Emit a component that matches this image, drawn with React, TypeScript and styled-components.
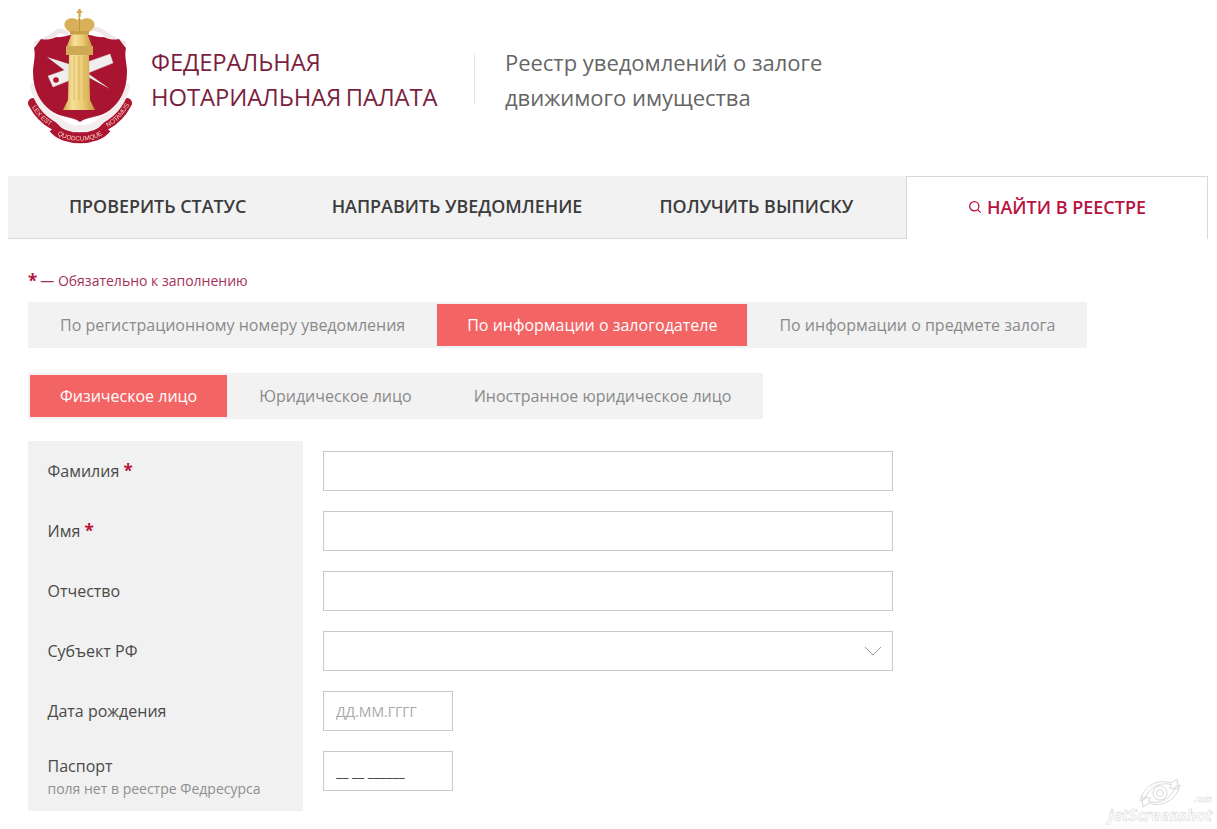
import styled, { createGlobalStyle } from 'styled-components'

const GlobalStyle = createGlobalStyle`
  html, body {
    margin: 0;
    padding: 0;
    background: #fff;
  }
  body {
    font-family: "Open Sans", "Noto Sans", "DejaVu Sans", sans-serif;
    color: #4a4a4a;
  }
  * {
    box-sizing: border-box;
  }
`

const Logo = () => (
  <LogoSvg viewBox="28 8 104 140" aria-hidden="true">
    <defs>
      <linearGradient id="gold" x1="0" x2="1" y1="0" y2="0">
        <stop offset="0" stopColor="#d2a648" />
        <stop offset="0.3" stopColor="#f5e09a" />
        <stop offset="0.62" stopColor="#ebcb75" />
        <stop offset="1" stopColor="#c4973c" />
      </linearGradient>
      <path id="ribbonLeft" d="M31 105 C36 115 43 122 52 127" />
      <path id="ribbonMid" d="M54 131 C64 144 96 144 106 131" />
      <path id="ribbonRight" d="M108 127 C117 122 124 115 129 105" />
    </defs>

    {/* ribbon */}
    <g fill="none" stroke="#ad1530" strokeWidth="10" strokeLinecap="round">
      <path d="M33 103 C38 113 45 120 54 125" />
      <path d="M127 103 C122 113 115 120 106 125" />
    </g>
    <path d="M54 128 C64 141 96 141 106 128" fill="none" stroke="#ad1530" strokeWidth="11" />

    {/* white scrollwork round the shield */}
    <path
      d="M33 86 C37 104 47 114 58 120 C62 126 70 126 74 129 C78 127 82 127 86 129 C90 126 98 126 102 120 C113 114 123 104 127 86"
      fill="none"
      stroke="#f3eded"
      strokeWidth="6"
      strokeLinecap="round"
    />
    <path
      d="M36 43 C44 41 51 37 57 32 C60 30 63 31 66 33 M124 43 C116 41 109 37 103 32 C100 30 97 28 92 29"
      fill="none"
      stroke="#efe6e6"
      strokeWidth="4.5"
      strokeLinecap="round"
    />

    {/* shield */}
    <path
      d="M80 34 C70 34 62 38 56 37 C50 40 45 40 41 39 C38 43 36 46 34 48 C36 56 33 64 33 72 C33 90 40 102 50 110 C60 118 72 116 80 122 C88 116 100 118 110 110 C120 102 127 90 127 72 C127 64 124 56 126 48 C124 46 122 43 119 39 C115 40 110 40 104 37 C98 38 90 34 80 34 Z"
      fill="#a91530"
    />

    {/* scroll */}
    <path d="M48 76 L110 54 L113 63 L53 87 Z" fill="#f1eeee" stroke="#d5cccc" strokeWidth="0.5" />
    <circle cx="56" cy="80" r="2.8" fill="#b5132f" />

    {/* compass */}
    <path d="M47 57 L72 65 L72 76 Z" fill="#ecebeb" />
    <path d="M86 76 L110 89 L86 72 Z" fill="#ecebeb" />

    {/* column */}
    <path d="M72 33 H87 L92 46 H67 Z" fill="url(#gold)" />
    <path d="M69 55 H89 L90 100 L92 104 L95 110 H63 L66 104 L68 100 Z" fill="url(#gold)" />
    <rect x="66" y="46" width="27" height="9" fill="#d0a954" />
    <path d="M74 56 V100 M79 56 V100 M84 56 V100" stroke="#d0a850" strokeWidth="0.7" />

    {/* crown */}
    <path
      d="M71 33 C66 30 63 26 65 22 C67 18 73 17 78 20 L79 16 L81 20 C86 17 92 18 94 22 C96 26 92 30 88 33 Z"
      fill="#d9b05a"
    />
    <path d="M79.5 18 V32" stroke="#c2963e" strokeWidth="1" />
    <rect x="70" y="31" width="19" height="3.5" fill="#c99f48" />
    <rect x="78.3" y="9" width="2.4" height="8" fill="#d4a94f" />
    <rect x="76.8" y="11" width="5.4" height="2" fill="#d4a94f" />

    <g fontSize="6.4" fill="#f6d5c6" fontFamily="Liberation Sans, sans-serif">
      <text>
        <textPath href="#ribbonLeft" startOffset="50%" textAnchor="middle">
          LEX EST
        </textPath>
      </text>
      <text>
        <textPath href="#ribbonMid" startOffset="50%" textAnchor="middle">
          QUODCUMQUE
        </textPath>
      </text>
      <text>
        <textPath href="#ribbonRight" startOffset="50%" textAnchor="middle">
          NOTAMUS
        </textPath>
      </text>
    </g>
  </LogoSvg>
)

const App = () => {
  return (
    <Page>
      <GlobalStyle />
      <Header>
        <Logo />
        <OrgName>
          ФЕДЕРАЛЬНАЯ
          <br />
          НОТАРИАЛЬНАЯ ПАЛАТА
        </OrgName>
        <Divider />
        <RegistryName>
          Реестр уведомлений о залоге
          <br />
          движимого имущества
        </RegistryName>
      </Header>

      <Nav>
        <NavTab>ПРОВЕРИТЬ СТАТУС</NavTab>
        <NavTab>НАПРАВИТЬ УВЕДОМЛЕНИЕ</NavTab>
        <NavTab>ПОЛУЧИТЬ ВЫПИСКУ</NavTab>
        <NavTabActive>
          <svg width="14" height="14" viewBox="0 0 14 14" fill="none" stroke="#b8123f" strokeWidth="1.3">
            <circle cx="6.3" cy="6.3" r="4.6" />
            <path d="M9.6 9.6 L12.6 12.6" />
          </svg>
          НАЙТИ В РЕЕСТРЕ
        </NavTabActive>
      </Nav>

      <Content>
        <RequiredNote>
          <Star>*</Star> — Обязательно к заполнению
        </RequiredNote>

        <SegmentBar>
          <Segment>По регистрационному номеру уведомления</Segment>
          <Segment $active>По информации о залогодателе</Segment>
          <Segment>По информации о предмете залога</Segment>
        </SegmentBar>

        <SegmentBar>
          <Segment $active>Физическое лицо</Segment>
          <Segment>Юридическое лицо</Segment>
          <Segment>Иностранное юридическое лицо</Segment>
        </SegmentBar>

        <Form>
          <Row>
            <LabelCell>
              <span>
                Фамилия <Star>*</Star>
              </span>
            </LabelCell>
            <FieldCell>
              <Input />
            </FieldCell>
          </Row>
          <Row>
            <LabelCell>
              <span>
                Имя <Star>*</Star>
              </span>
            </LabelCell>
            <FieldCell>
              <Input />
            </FieldCell>
          </Row>
          <Row>
            <LabelCell>Отчество</LabelCell>
            <FieldCell>
              <Input />
            </FieldCell>
          </Row>
          <Row>
            <LabelCell>Субъект РФ</LabelCell>
            <FieldCell>
              <SelectBox>
                <svg width="18" height="10" viewBox="0 0 18 10" fill="none" stroke="#9a9a9a" strokeWidth="1">
                  <path d="M1 1 L9 9 L17 1" />
                </svg>
              </SelectBox>
            </FieldCell>
          </Row>
          <Row>
            <LabelCell>Дата рождения</LabelCell>
            <FieldCell>
              <ShortInput placeholder="ДД.ММ.ГГГГ" />
            </FieldCell>
          </Row>
          <Row>
            <LabelCell $last>
              <LabelStack>
                Паспорт
                <LabelHint>поля нет в реестре Федресурса</LabelHint>
              </LabelStack>
            </LabelCell>
            <FieldCell>
              <ShortInput defaultValue="__ __ ______" />
            </FieldCell>
          </Row>
        </Form>
      </Content>

      <Watermark>
        <WatermarkIcon viewBox="0 0 50 32" fill="none" stroke="#d9d9d9" strokeWidth="1">
          <path d="M5 24 C8 10 22 1 36 6 L42 2 L43 12 L34 11 L37 8 C26 4 14 10 10 22 Z" />
          <path d="M45 8 C42 22 28 31 14 26 L8 30 L7 20 L16 21 L13 24 C24 28 36 22 40 10 Z" />
          <circle cx="25" cy="16" r="7" />
          <circle cx="25" cy="16" r="3.5" />
        </WatermarkIcon>
        <WatermarkText>
          jetScreenshot
          <WatermarkDomain>.com</WatermarkDomain>
        </WatermarkText>
      </Watermark>
    </Page>
  )
}

const Page = styled.div`
  position: relative;
  width: 1217px;
  height: 829px;
  overflow: hidden;
  background: #fff;
`

const Header = styled.header`
  display: flex;
  align-items: center;
  height: 176px;
  padding: 8px 0 28px 28px;
`

const LogoSvg = styled.svg`
  width: 104px;
  height: 140px;
  flex: none;
  filter: blur(0.3px);
`

const OrgName = styled.div`
  margin: 3px 0 0 19px;
  width: 323px;
  font-size: 23.8px;
  word-spacing: -1.5px;
  letter-spacing: -0.08px;
  line-height: 35px;
  color: #7b1f41;
  white-space: nowrap;
`

const Divider = styled.div`
  width: 1px;
  height: 50px;
  margin: 2px 0 0;
  background: #e6e6e6;
`

const RegistryName = styled.div`
  margin: 3px 0 0 30px;
  font-size: 22px;
  letter-spacing: -0.03px;
  line-height: 35px;
  color: #666;
  white-space: nowrap;
`

const Nav = styled.nav`
  display: flex;
  margin: 0 9px 0 8px;
  height: 63px;
`

const NavTab = styled.div`
  flex: 1;
  display: flex;
  align-items: center;
  justify-content: center;
  height: 63px;
  padding-bottom: 2px;
  background: #f2f2f2;
  border-bottom: 1px solid #dcdcdc;
  font-size: 17.9px;
  font-weight: 600;
  color: #3c3c3c;
  white-space: nowrap;
`

const NavTabActive = styled(NavTab)`
  flex: none;
  width: 302px;
  gap: 5px;
  background: #fff;
  border: 1px solid #d8d8d8;
  border-bottom: none;
  font-size: 18px;
  color: #b8123f;
`

const Content = styled.main`
  padding: 0 0 0 28px;
`

const RequiredNote = styled.div`
  display: flex;
  align-items: center;
  gap: 3px;
  height: 63px;
  padding-top: 19px;
  font-size: 14px;
  color: #a5305a;
`

const Star = styled.b`
  color: #b8123f;
  font-size: 17px;
  line-height: 1;
  font-weight: 700;
`

const SegmentBar = styled.div`
  display: flex;
  width: fit-content;
  gap: 2px;
  padding: 2px;
  margin-bottom: 25px;
  background: #f2f2f2;
`

const Segment = styled.div<{ $active?: boolean }>`
  height: 42px;
  display: flex;
  align-items: center;
  padding: 0 30px;
  font-size: 16px;
  white-space: nowrap;
  color: ${(p) => (p.$active ? '#fff' : '#8a8a8a')};
  background: ${(p) => (p.$active ? '#f36464' : 'transparent')};
`

const Form = styled.form`
  display: flex;
  flex-direction: column;
  margin-top: -3px;
`

const Row = styled.div`
  display: flex;
`

const LabelCell = styled.div<{ $last?: boolean }>`
  width: 275px;
  height: ${(p) => (p.$last ? 70 : 60)}px;
  padding: ${(p) => (p.$last ? '1px' : '0')} 0 0 19.5px;
  display: flex;
  align-items: center;
  background: #f1f1f1;
  font-size: 16px;
  color: #4a4a4a;
`

const LabelStack = styled.div`
  display: flex;
  flex-direction: column;
  gap: 2px;
`

const LabelHint = styled.span`
  font-size: 14px;
  color: #8f8f8f;
`

const FieldCell = styled.div`
  padding: 10px 0 0 20px;
`

const Input = styled.input`
  display: block;
  width: 570px;
  height: 40px;
  border: 1px solid #c8c8c8;
  background: #fff;
  padding: 0 12px;
  font-family: inherit;
  font-size: 14px;
  color: #444;
  outline: none;
`

const ShortInput = styled(Input)`
  width: 130px;
  &::placeholder {
    color: #a8a8a8;
    opacity: 1;
  }
`

const SelectBox = styled.div`
  display: flex;
  align-items: center;
  justify-content: flex-end;
  width: 570px;
  height: 40px;
  border: 1px solid #c8c8c8;
  padding-right: 10px;
`

const Watermark = styled.div`
  position: absolute;
  right: 5px;
  bottom: 5px;
  display: flex;
  flex-direction: column;
  align-items: center;
`

const WatermarkIcon = styled.svg`
  width: 50px;
  height: 32px;
  margin-bottom: -3px;
`

const WatermarkText = styled.span`
  position: relative;
  font-size: 16px;
  font-style: italic;
  font-weight: 700;
  line-height: 18px;
  color: #fff;
  -webkit-text-stroke: 0.5px #cfcfcf;
`

const WatermarkDomain = styled.span`
  position: absolute;
  right: 0;
  top: -11px;
  font-size: 8px;
  line-height: 8px;
  -webkit-text-stroke: 0.3px #cfcfcf;
`

export default App
